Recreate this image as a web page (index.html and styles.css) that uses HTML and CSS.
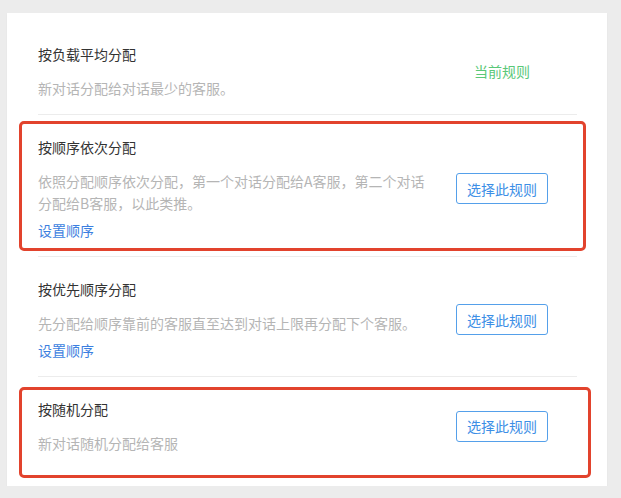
FILE: index.html
```html
<!DOCTYPE html>
<html lang="zh-CN">
<head>
    <meta charset="utf-8">
    <title>分配规则</title>
    <link rel="stylesheet" href="styles.css">
</head>
<body>
    <div class="card">
        <div class="rule">
            <div class="rule-text">
                <div class="rule-title">按负载平均分配</div>
                <div class="rule-desc">新对话分配给对话最少的客服。</div>
            </div>
            <div class="rule-action">
                <span class="current">当前规则</span>
            </div>
        </div>

        <div class="rule marked">
            <div class="rule-text">
                <div class="rule-title">按顺序依次分配</div>
                <div class="rule-desc">依照分配顺序依次分配，第一个对话分配给A客服，第二个对话分配给B客服，以此类推。</div>
                <a class="rule-link" href="#">设置顺序</a>
            </div>
            <div class="rule-action">
                <button class="btn">选择此规则</button>
            </div>
        </div>

        <div class="rule">
            <div class="rule-text">
                <div class="rule-title">按优先顺序分配</div>
                <div class="rule-desc">先分配给顺序靠前的客服直至达到对话上限再分配下个客服。</div>
                <a class="rule-link" href="#">设置顺序</a>
            </div>
            <div class="rule-action">
                <button class="btn">选择此规则</button>
            </div>
        </div>

        <div class="rule marked last">
            <div class="rule-text">
                <div class="rule-title">按随机分配</div>
                <div class="rule-desc">新对话随机分配给客服</div>
            </div>
            <div class="rule-action">
                <button class="btn">选择此规则</button>
            </div>
        </div>
    </div>
</body>
</html>
```

FILE: styles.css
```css
body {
    margin: 0;
    background-color: #ececec;
    font-family: "Noto Sans CJK SC", "Noto Sans", sans-serif;
    font-size: 14px;
}

.card {
    background-color: #fff;
    margin: 13px 14px 0 7px;
    padding: 9px 30px 17px 31px;
    box-shadow: 0 1px 2px rgb(0 0 0 / 4%);
}

.rule {
    position: relative;
    display: flex;
    align-items: center;
    padding: 22px 0 15px;
    border-bottom: 1px solid #ececec;
}

.rule.last {
    border-bottom: none;
}

.rule-text {
    width: 396px;
}

.rule-title {
    color: #333;
    line-height: 20px;
    margin-bottom: 13px;
}

.rule-desc {
    color: #b5b5b5;
    line-height: 22px;
}

.rule-link {
    display: block;
    margin-top: 5px;
    line-height: 22px;
    color: #3c7fe0;
    text-decoration: none;
}

.rule-action {
    margin-left: auto;
    margin-right: 29px;
    margin-top: -1px;
    width: 92px;
    text-align: center;
}

.current {
    color: #5ac878;
    line-height: 22px;
}

.btn {
    width: 92px;
    height: 31px;
    padding: 0;
    background: #fff;
    border: 1px solid #55a0ea;
    border-radius: 3px;
    color: #3d8fe6;
    font-family: inherit;
    font-size: 14px;
}

/* red annotation frame drawn over the row */
.rule.marked::after {
    content: "";
    position: absolute;
    top: 6px;
    bottom: 5px;
    left: -19px;
    right: -9px;
    border: 3px solid #e2432d;
    border-radius: 5px;
    pointer-events: none;
}

.rule.marked.last::after {
    top: 10px;
    bottom: -9px;
    right: -14px;
}
```
